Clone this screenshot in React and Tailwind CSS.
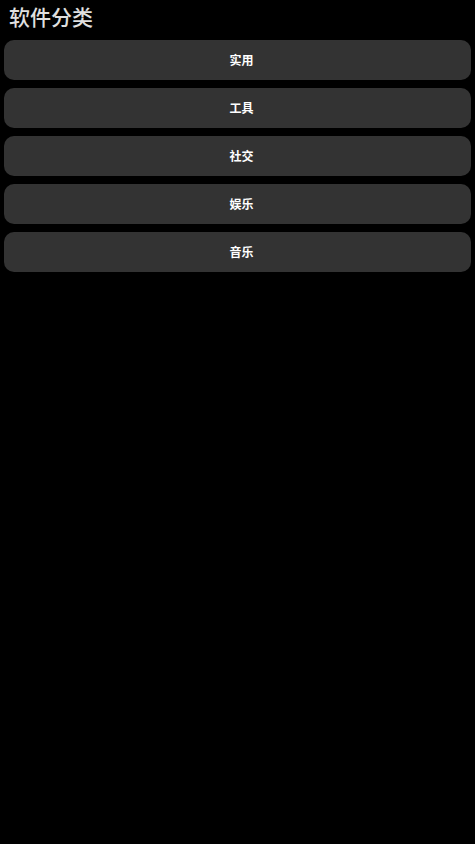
export default function App() {
  const items = ["实用", "工具", "社交", "娱乐", "音乐"];
  return (
    <div
      className="min-h-[844px] w-full bg-black px-1"
      style={{ fontFamily: '"Noto Sans CJK SC", "Noto Sans", sans-serif' }}
    >
      <div className="flex h-[36px] items-center px-[5px] pb-[2px] text-[21px] font-medium text-[#e0e0e0]">
        软件分类
      </div>
      <div className="mt-[4px] flex flex-col gap-2">
        {items.map((t) => (
          <button
            key={t}
            className="flex h-[40px] w-full items-center justify-center rounded-[10px] bg-[#333333] pl-[8px] text-[12px] font-bold text-white"
          >
            {t}
          </button>
        ))}
      </div>
    </div>
  );
}
